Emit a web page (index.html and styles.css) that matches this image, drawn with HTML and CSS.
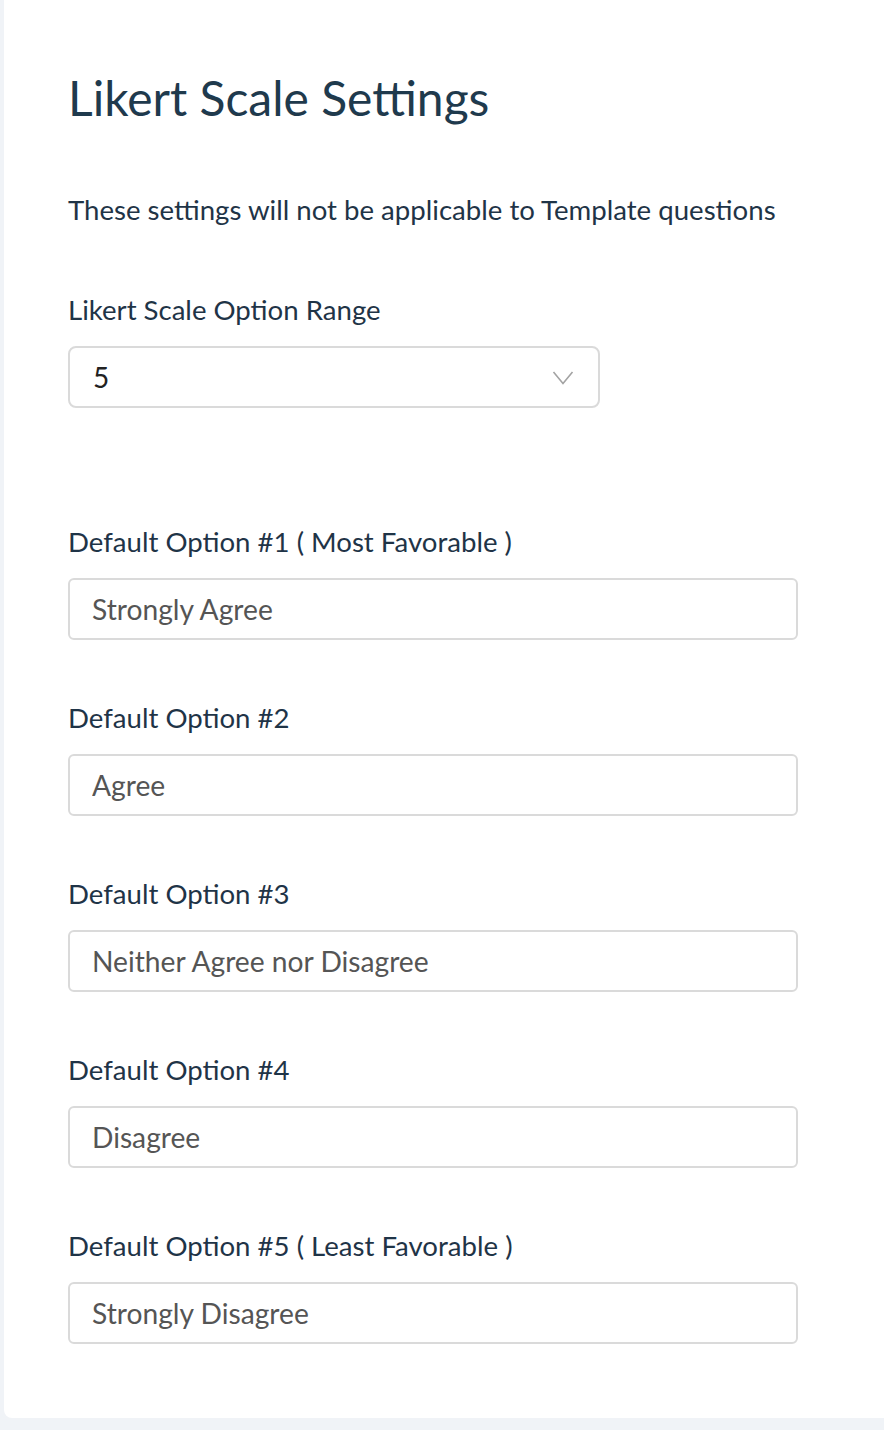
FILE: index.html
```html
<!DOCTYPE HTML>
<html>
    <head>
        <meta charset="UTF-8">
        <title>Likert Scale Settings</title>
        <link rel="stylesheet" href="styles.css">
    </head>
    <body>
        <div class="card">
            <h1 class="title">Likert Scale Settings</h1>
            <p class="note">These settings will not be applicable to Template questions</p>

            <!--range select-->
            <div class="field field-range">
                <label class="label">Likert Scale Option Range</label>
                <div class="select">
                    <span>5</span>
                    <svg class="caret" width="22" height="16" viewBox="0 0 22 16">
                        <path d="M1.5 2 L11 13.5 L20.5 2" fill="none" stroke="#a3a3a3" stroke-width="1.6"/>
                    </svg>
                </div>
            </div>

            <!--default options-->
            <div class="field field-first">
                <label class="label">Default Option #1 ( Most Favorable )</label>
                <input class="text" type="text" value="Strongly Agree">
            </div>
            <div class="field">
                <label class="label">Default Option #2</label>
                <input class="text" type="text" value="Agree">
            </div>
            <div class="field">
                <label class="label">Default Option #3</label>
                <input class="text" type="text" value="Neither Agree nor Disagree">
            </div>
            <div class="field">
                <label class="label">Default Option #4</label>
                <input class="text" type="text" value="Disagree">
            </div>
            <div class="field">
                <label class="label">Default Option #5 ( Least Favorable )</label>
                <input class="text" type="text" value="Strongly Disagree">
            </div>
        </div>
    </body>
</html>
```

FILE: styles.css
```css
body{
    margin:0;
    background:#f0f3f7;
    font-family:Lato,"Open Sans",sans-serif;
    color:#1f3447;
}
h1,p{margin:0;}
.card{
    margin-left:4px;
    height:1418px;
    box-sizing:border-box;
    padding:72px 0 0 64px;
    background:#fff;
    border-bottom-left-radius:8px;
}
.title{
    font-size:48px;
    line-height:52px;
    font-weight:400;
    color:#1f3a4d;
}
.note{
    margin-top:70px;
    font-size:27.6px;
    line-height:32px;
}
.field{
    display:flex;
    flex-direction:column;
    gap:20px;
    margin-top:62px;
}
.field-range{margin-top:68px;}
.field-first{margin-top:118px;}
.label{
    font-size:27.6px;
    line-height:32px;
}
.select{
    display:flex;
    align-items:center;
    justify-content:space-between;
    width:532px;
    height:62px;
    box-sizing:border-box;
    padding:0 24px 0 23px;
    border:2px solid #dadada;
    border-radius:8px;
    font-size:28px;
    color:#222;
}
.caret{margin-top:2px;}
.text{
    width:730px;
    height:62px;
    box-sizing:border-box;
    padding:0 22px;
    border:2px solid #dadada;
    border-radius:6px;
    font-family:Lato,"Open Sans",sans-serif;
    font-size:28.2px;
    color:#555;
    outline:none;
}
```
